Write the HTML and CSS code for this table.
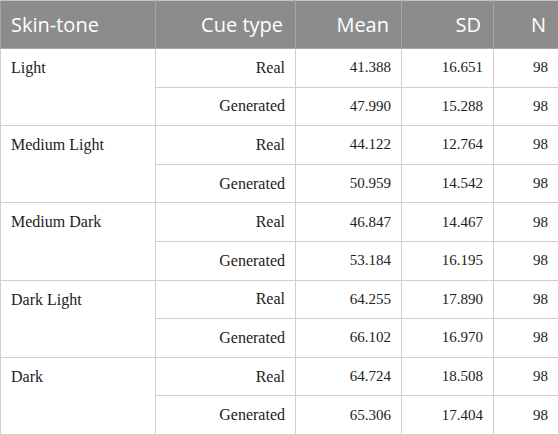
FILE: index.html
```html
<!DOCTYPE html>
<html>
<head>
<meta charset="utf-8">
<link rel="stylesheet" href="styles.css">
</head>
<body>
<table class="data">
  <colgroup>
    <col class="c1"><col class="c2"><col class="c3"><col class="c4"><col class="c5">
  </colgroup>
  <thead>
    <tr>
      <th class="left">Skin-tone</th>
      <th>Cue type</th>
      <th>Mean</th>
      <th>SD</th>
      <th>N</th>
    </tr>
  </thead>
  <tbody>
    <tr><td class="group" rowspan="2">Light</td><td class="label">Real</td><td>41.388</td><td>16.651</td><td>98</td></tr>
    <tr><td class="label">Generated</td><td>47.990</td><td>15.288</td><td>98</td></tr>
    <tr><td class="group" rowspan="2">Medium Light</td><td class="label">Real</td><td>44.122</td><td>12.764</td><td>98</td></tr>
    <tr><td class="label">Generated</td><td>50.959</td><td>14.542</td><td>98</td></tr>
    <tr><td class="group" rowspan="2">Medium Dark</td><td class="label">Real</td><td>46.847</td><td>14.467</td><td>98</td></tr>
    <tr><td class="label">Generated</td><td>53.184</td><td>16.195</td><td>98</td></tr>
    <tr><td class="group" rowspan="2">Dark Light</td><td class="label">Real</td><td>64.255</td><td>17.890</td><td>98</td></tr>
    <tr><td class="label">Generated</td><td>66.102</td><td>16.970</td><td>98</td></tr>
    <tr><td class="group" rowspan="2">Dark</td><td class="label">Real</td><td>64.724</td><td>18.508</td><td>98</td></tr>
    <tr><td class="label">Generated</td><td>65.306</td><td>17.404</td><td>98</td></tr>
  </tbody>
</table>
</body>
</html>
```

FILE: styles.css
```css
html, body {
  margin: 0;
  padding: 0;
  background: #ffffff;
}

.data {
  width: 558px;
  border-collapse: collapse;
  table-layout: fixed;
  font-family: "Liberation Serif", "Times New Roman", serif;
  font-size: 15px;
  color: #222222;
}

.c1 { width: 155px; }
.c2 { width: 140px; }
.c3 { width: 106px; }
.c4 { width: 92px; }
.c5 { width: 65px; }

.data th {
  height: 47px;
  padding: 0 12px 0 10px;
  background: #8c8c8c;
  color: #ffffff;
  font-family: "Open Sans", "Noto Sans", sans-serif;
  font-size: 20px;
  font-weight: 400;
  text-align: right;
  vertical-align: middle;
  border: 1px solid #a6a6a6;
  border-top-color: #c4c4c4;
  white-space: nowrap;
}

.data th.left {
  text-align: left;
}

.data td {
  height: 37.6px;
  padding: 0 10px;
  text-align: right;
  vertical-align: middle;
  border: 1px solid #cfcfcf;
  white-space: nowrap;
}

.data td.label {
  font-size: 16px;
}

.data td.group {
  font-size: 16px;
  text-align: left;
  vertical-align: top;
  padding-top: 10px;
}
```
